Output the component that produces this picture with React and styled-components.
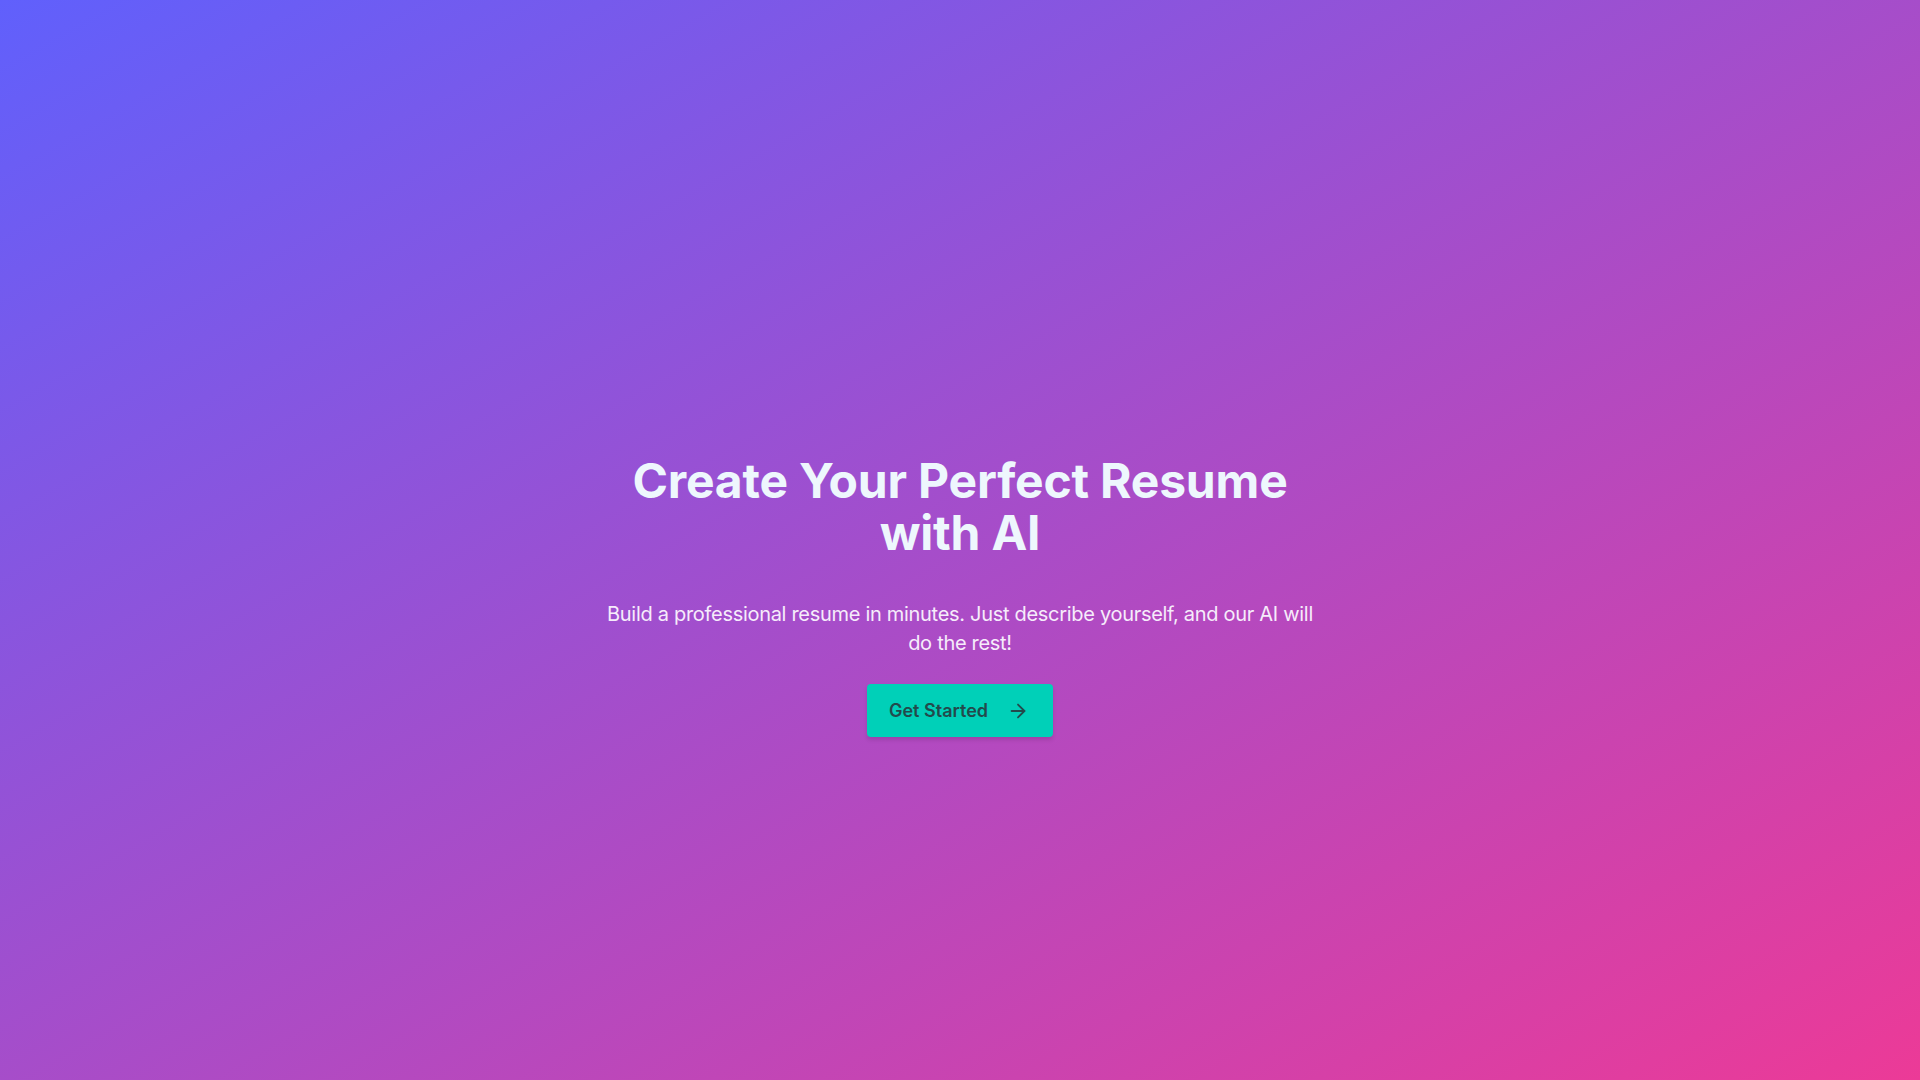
import React from 'react'
import styled, { createGlobalStyle } from 'styled-components'
import { ArrowRight } from 'lucide-react'

// Global reset
const GlobalStyle = createGlobalStyle`
	html, body, #root {
		margin: 0;
		padding: 0;
		height: 100%;
	}
	body {
		font-family: Inter, 'Noto Sans', 'Liberation Sans', sans-serif;
	}
`

const Hero = styled.main`
	min-height: 100vh;
	display: flex;
	align-items: center;
	justify-content: center;
	background: linear-gradient(to bottom right, #6060fc, #ec3a97);
	box-sizing: border-box;
	padding: 112px 24px 0;
`

const Content = styled.div`
	display: flex;
	flex-direction: column;
	align-items: center;
	text-align: center;
	max-width: 730px;
`

const Title = styled.h1`
	margin: 0;
	font-size: 48px;
	line-height: 52px;
	font-weight: 700;
	letter-spacing: -0.2px;
	color: #eef7fd;
	max-width: 680px;
`

const Subtitle = styled.p`
	margin: 41px 0 0;
	font-size: 20px;
	line-height: 29px;
	font-weight: 400;
	letter-spacing: -0.3px;
	color: #f6ecfb;
`

const StartButton = styled.button`
	margin-top: 26px;
	display: flex;
	align-items: center;
	gap: 19px;
	height: 53px;
	padding: 0 24px 0 22px;
	border: none;
	border-radius: 4px;
	background-color: #00d0b8;
	color: #234a4c;
	font-family: inherit;
	font-size: 18px;
	font-weight: 600;
	cursor: pointer;
	box-shadow: 0 3px 4px rgba(0, 0, 0, 0.12);
`

const App = () => {
	return (
		<>
			<GlobalStyle />
			<Hero>
				<Content>
					<Title>Create Your Perfect Resume with AI</Title>
					<Subtitle>
						Build a professional resume in minutes. Just describe yourself, and our AI will do the rest!
					</Subtitle>
					<StartButton>
						Get Started
						<ArrowRight size={22} strokeWidth={2} />
					</StartButton>
				</Content>
			</Hero>
		</>
	)
}

export default App
